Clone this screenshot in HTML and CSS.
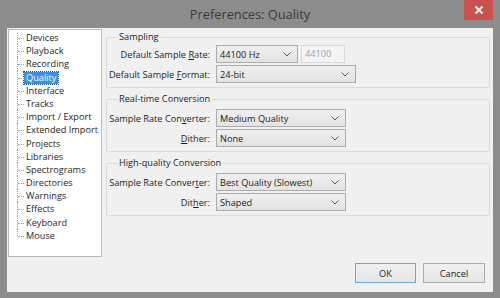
FILE: index.html
```html
<!DOCTYPE html>
<html lang="en">
<head>
	<meta charset="utf-8">
	<title>Preferences: Quality</title>
	<link rel="stylesheet" href="styles.css">
</head>
<body>
	<div class="window">
		<div class="titlebar">
			<span></span>
			<span class="title">Preferences: Quality</span>
			<button class="close" aria-label="Close">
				<svg width="10" height="10" viewBox="0 0 10 10"><path d="M1.5 1.5 L8.5 8.5 M8.5 1.5 L1.5 8.5" stroke="#fff" stroke-width="1.8" fill="none"/></svg>
			</button>
		</div>
		<div class="client">
			<div class="main-row">
				<div class="tree">
					<ul>
						<li><span>Devices</span></li>
						<li><span>Playback</span></li>
						<li><span>Recording</span></li>
						<li><span class="selected">Quality</span></li>
						<li><span>Interface</span></li>
						<li><span>Tracks</span></li>
						<li><span>Import / Export</span></li>
						<li><span>Extended Import</span></li>
						<li><span>Projects</span></li>
						<li><span>Libraries</span></li>
						<li><span>Spectrograms</span></li>
						<li><span>Directories</span></li>
						<li><span>Warnings</span></li>
						<li><span>Effects</span></li>
						<li><span>Keyboard</span></li>
						<li><span>Mouse</span></li>
					</ul>
				</div>
				<div class="panels">
					<fieldset class="group first">
						<legend>Sampling</legend>
						<div class="rows">
							<label>Default Sample <u>R</u>ate:</label>
							<div class="pair">
								<div class="combo w-rate"><span>44100 Hz</span><svg width="8" height="5" viewBox="0 0 8 5"><path d="M0.5 0.5 L4 4 L7.5 0.5" stroke="#555" fill="none"/></svg></div>
								<div class="field">44100</div>
							</div>
							<label>Default Sample <u>F</u>ormat:</label>
							<div class="combo w-format"><span>24-bit</span><svg width="8" height="5" viewBox="0 0 8 5"><path d="M0.5 0.5 L4 4 L7.5 0.5" stroke="#555" fill="none"/></svg></div>
						</div>
					</fieldset>
					<fieldset class="group">
						<legend>Real-time Conversion</legend>
						<div class="rows">
							<label>Sample Rate Con<u>v</u>erter:</label>
							<div class="combo w-conv"><span>Medium Quality</span><svg width="8" height="5" viewBox="0 0 8 5"><path d="M0.5 0.5 L4 4 L7.5 0.5" stroke="#555" fill="none"/></svg></div>
							<label><u>D</u>ither:</label>
							<div class="combo w-conv"><span>None</span><svg width="8" height="5" viewBox="0 0 8 5"><path d="M0.5 0.5 L4 4 L7.5 0.5" stroke="#555" fill="none"/></svg></div>
						</div>
					</fieldset>
					<fieldset class="group">
						<legend>High-quality Conversion</legend>
						<div class="rows">
							<label>Sample Rate Conver<u>t</u>er:</label>
							<div class="combo w-conv"><span>Best Quality (Slowest)</span><svg width="8" height="5" viewBox="0 0 8 5"><path d="M0.5 0.5 L4 4 L7.5 0.5" stroke="#555" fill="none"/></svg></div>
							<label>Dit<u>h</u>er:</label>
							<div class="combo w-conv"><span>Shaped</span><svg width="8" height="5" viewBox="0 0 8 5"><path d="M0.5 0.5 L4 4 L7.5 0.5" stroke="#555" fill="none"/></svg></div>
						</div>
					</fieldset>
				</div>
			</div>
			<div class="buttons">
				<button class="btn default">OK</button>
				<button class="btn">Cancel</button>
			</div>
		</div>
	</div>
</body>
</html>
```

FILE: styles.css
```css
body {
	margin: 0;
	padding: 0;
	font-family: "Open Sans", "Noto Sans", sans-serif;
	font-size: 9.2px;
	color: #1e1e1e;
}

.window {
	width: 500px;
	height: 298px;
	background: #8c8c8c;
	display: flex;
	flex-direction: column;
}

.titlebar {
	height: 28px;
	display: grid;
	grid-template-columns: 1fr auto 1fr;
	align-items: start;
}

.title {
	font-size: 12.8px;
	color: #3a3a3a;
	line-height: 28px;
}

.close {
	justify-self: end;
	margin-right: 7px;
	width: 29px;
	height: 20px;
	border: none;
	padding: 0;
	background: #c9514e;
	display: flex;
	align-items: center;
	justify-content: center;
}

.client {
	flex: 1;
	margin: 0 7px 6px;
	background: #f0f0f0;
	display: flex;
	flex-direction: column;
}

.main-row {
	display: flex;
	gap: 4px;
	padding: 1px 3px 0 1px;
}

.tree {
	width: 94px;
	height: 228px;
	box-sizing: border-box;
	background: #fff;
	border: 1px solid #b9b9b9;
}

.tree ul {
	list-style: none;
	margin: 0;
	padding: 1px 0 0 0;
}

.tree li {
	position: relative;
	height: 13.2px;
	line-height: 13.2px;
	padding-left: 17px;
	white-space: nowrap;
}

.tree li::before {
	content: "";
	position: absolute;
	left: 9px;
	top: 7px;
	width: 6px;
	border-top: 1px dotted #a0a0a0;
}

.tree li::after {
	content: "";
	position: absolute;
	left: 8px;
	top: 0;
	height: 100%;
	border-left: 1px dotted #a0a0a0;
}

.tree li:first-child::after {
	top: 2px;
	height: calc(100% - 2px);
}

.tree li:last-child::after {
	height: 7px;
}

.tree .selected {
	display: inline-block;
	line-height: 12px;
	padding: 0 2px;
	margin-left: -2px;
	background: #3a8ee6;
	color: #fff;
	outline: 1px dotted #1d4f85;
}

.panels {
	flex: 1;
	margin-top: 2px;
	display: flex;
	flex-direction: column;
	gap: 5px;
}

.group {
	margin: 0;
	min-width: 0;
	padding: 4px 5px 4px;
	border: 1px solid #dadada;
	border-radius: 2px;
}

.group.first {
	padding-top: 2px;
}

.group legend {
	padding: 0 2px;
	margin-left: 5px;
	line-height: 12px;
}

.rows {
	display: grid;
	grid-template-columns: 98px auto;
	column-gap: 6px;
	row-gap: 2px;
	align-items: center;
	justify-items: start;
}

.rows label {
	justify-self: end;
	white-space: nowrap;
}

.pair {
	display: flex;
	gap: 3px;
}

.combo {
	height: 18px;
	box-sizing: border-box;
	border: 1px solid #acacac;
	background: linear-gradient(#efefef, #e3e3e3);
	display: flex;
	align-items: center;
	justify-content: space-between;
	padding: 0 6px 0 3px;
}

.w-rate { width: 82px; }
.w-format { width: 140px; }
.w-conv { width: 130px; }

.field {
	width: 44px;
	height: 18px;
	box-sizing: border-box;
	border: 1px solid #d9d9d9;
	background: #f4f4f4;
	color: #a2a2a2;
	padding: 0 3px;
	line-height: 16px;
}

.buttons {
	margin-top: auto;
	display: flex;
	justify-content: flex-end;
	gap: 7px;
	padding: 0 8px 9px 0;
}

.btn {
	width: 62px;
	height: 20px;
	font-family: inherit;
	font-size: inherit;
	color: #1e1e1e;
	border: 1px solid #acacac;
	background: linear-gradient(#f0f0f0, #e5e5e5);
	padding: 0;
}

.btn.default {
	width: 61px;
	border-color: #6aa7dc;
}
```
